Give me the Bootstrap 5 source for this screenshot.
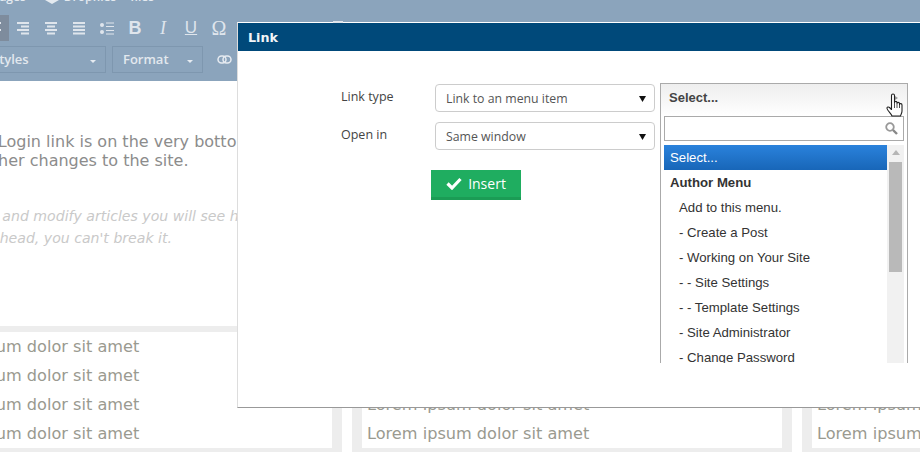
<!DOCTYPE html>
<html lang="en">
<head>
<meta charset="utf-8">
<title>Link</title>
<link href="https://cdn.jsdelivr.net/npm/bootstrap@5.3.0/dist/css/bootstrap.min.css" rel="stylesheet">
<style>
html,body{height:100%;overflow:hidden;background:#fff}
body{font-family:"Open Sans",sans-serif;position:relative}
.pg{width:1400px;margin:-14px 0 0 -98px}
.tb{background:#8ba4bc;height:95px}
.tb-top{height:29px;padding-left:90px;color:#e4eaf0;font-size:12px;font-weight:600;line-height:21px}
.tb-top span{display:block}
.tb-dia{margin:10px 5px 0 19px}
.tb-fl{margin-left:14px}
.tb-ico{margin-left:79px;height:26px}
.tb-btn{width:28px;height:26px;display:flex;align-items:center;justify-content:center;color:#dfe5ec}
.tb-btn.on{background:#7e8c9d}
.tb-b{font:bold 18px "Liberation Sans",sans-serif}
.tb-i{font:italic 18px "Liberation Serif",serif}
.tb-u{font:17px "Liberation Sans",sans-serif;text-decoration:underline}
.tb-o{font:20px "Liberation Serif",serif}
.tb-sel{margin-left:79px;margin-top:5px;gap:6px;align-items:center}
.tb-dd{height:27px;border:1px solid #7e97af;color:#e2e8ee;font-size:13px;font-weight:600;padding:0 10px;line-height:25px;position:relative}
.tb-dd::after{content:"";position:absolute;right:9px;top:13px;border:3px solid transparent;border-top:3px solid #e6ebf1;border-bottom:0}
.dd-a{width:125px}.dd-b{width:91px}
.art{height:245px;font-family:"DejaVu Sans",sans-serif;color:#8c8c8c;white-space:nowrap;padding-top:52px}
.art p{margin:0}
.l1{font-size:16px;line-height:18px;margin-left:61px!important}
.l2{font-size:16px;line-height:19px;margin-left:80px!important}
.l3{font-size:14.100px;line-height:22px;font-style:italic;color:#c9c9c9;margin-left:-6px!important;margin-top:35px!important}
.l4{font-size:14.100px;line-height:22px;font-style:italic;color:#c9c9c9;margin-left:65px!important}
.foot{display:grid;grid-template-columns:repeat(3,440px);gap:10px}
.fcol{border:solid #ededed;border-width:6px 10px 5px;padding:0 5px;height:127px;font-family:"DejaVu Sans",sans-serif;font-size:16.150px;line-height:29px;color:#9a9a90}
.dlg{position:absolute;left:237px;top:22px;width:700px;height:386px;background:#fff;border:1px solid #fff;border-left-color:#ddd;border-bottom:1px solid #999}
.dlg::before{content:"";position:absolute;left:95px;top:-2px;width:10px;height:2px;background:#dfe5ec}
.dlg-h{background:#00497a;color:#f2f5f8;font:bold 12.700px "DejaVu Sans",sans-serif;height:28px;line-height:29px;padding-left:10px}
.dlg-b{padding:33px 0 0 103px;gap:5px}
.frm{width:314px}
.frow{height:28px;margin-bottom:10px;align-items:center;font-size:12.500px;color:#444}
.frow label{width:94px;padding-bottom:1px}
.frow .form-select{width:220px;height:28px;padding:2px 10px 0;font-size:12.300px;color:#555;border:1px solid #ccc;border-radius:4px;background-image:url("data:image/svg+xml,%3Csvg xmlns='http://www.w3.org/2000/svg' width='8' height='7'%3E%3Cpath d='M0 1h7L3.500 7z' fill='%23111'/%3E%3C/svg%3E");background-position:right 7px center;background-size:8px 7px}
.ins{margin:20px 0 0 90px;width:90px;height:30px;padding:0;background:#1fad60;border:0;border-bottom:3px solid #1b9c55;border-radius:0;color:#fff;font-size:14px;display:flex;align-items:center;justify-content:center;gap:6px}
.ins:hover{background:#1fad60;color:#fff;border-bottom-color:#1b9c55}
.chz{width:248px;height:280px;margin-top:-1px;border:solid #aaa;border-width:1px 1px 0;overflow:hidden;font-family:"Liberation Sans",sans-serif;font-size:13.200px;color:#333;position:relative}
.chz-h{height:32px;padding:6px 8px;font-weight:700;color:#444;line-height:15px;background:linear-gradient(#eee,#fff);font-size:13px;position:relative}
.chz-h::after{content:"";position:absolute;left:231px;top:10px;border:4px solid transparent;border-left:6px solid #999;border-right:0}
.chz-s{margin:0 3px 4px;height:25px;border:1px solid #aaa;display:flex;align-items:center;justify-content:flex-end;padding-right:5px}
.chz-l{margin:0 3px;display:flex;background:#fff;height:240px}
.chz-i{flex:1;list-style:none;margin:0;padding:0}
.chz-i li{height:25px;line-height:25px;padding-left:15px;color:#333}
.chz-i li.hi{background:linear-gradient(#2a82dc,#1866b8);color:#fff;padding-left:6px}
.chz-i li.grp{font-weight:700;padding-left:6px}
.sbar{width:17px;background:#f1f1f1;padding:2px;display:flex;flex-direction:column;align-items:center}
.sbar i{display:block;border:4px solid transparent;border-bottom:5px solid #b5b5b5;border-top:0;margin:3px 0 6px}
.sbar b{display:block;width:13px;height:110px;background:#b9b9b9;margin-top:1px}
.hand{position:absolute;left:886px;top:92px}
</style>
</head>
<body>
<div class="pg">
  <div class="tb">
    <div class="tb-top d-flex">
      <span>Pages</span>
      <svg class="tb-dia" width="14" height="8" viewBox="0 0 14 8"><path d="M7 0l7 4-7 4-7-4z" fill="#e4eaf0"/></svg>
      <span>Dropfiles</span>
      <span class="tb-fl">files</span>
    </div>
    <div class="tb-ico d-flex">
      <div class="tb-btn on"><svg width="14" height="13" viewBox="0 0 14 13"><path d="M1 1h12M1 4.500h8M1 8h12M1 11.500h8" stroke="#dfe5ec" stroke-width="2"/></svg></div>
      <div class="tb-btn"><svg width="14" height="13" viewBox="0 0 14 13"><path d="M1 1h12M5 4.500h8M1 8h12M5 11.500h8" stroke="#dfe5ec" stroke-width="2"/></svg></div>
      <div class="tb-btn"><svg width="14" height="13" viewBox="0 0 14 13"><path d="M1 1h12M3 4.500h8M1 8h12M3 11.500h8" stroke="#dfe5ec" stroke-width="2"/></svg></div>
      <div class="tb-btn"><svg width="14" height="13" viewBox="0 0 14 13"><path d="M1 1h12M1 4.500h12M1 8h12M1 11.500h12" stroke="#dfe5ec" stroke-width="2"/></svg></div>
      <div class="tb-btn"><svg width="14" height="13" viewBox="0 0 14 13"><circle cx="2" cy="3" r="2" fill="#dfe5ec"/><circle cx="2" cy="10" r="2" fill="#dfe5ec"/><path d="M6 1h8M6 4.500h8M6 8.500h8M6 12h8" stroke="#dfe5ec" stroke-width="1"/></svg></div>
      <div class="tb-btn tb-b">B</div>
      <div class="tb-btn tb-i">I</div>
      <div class="tb-btn tb-u">U</div>
      <div class="tb-btn tb-o">Ω</div>
    </div>
    <div class="tb-sel d-flex">
      <div class="tb-dd dd-a">Styles</div>
      <div class="tb-dd dd-b">Format</div>
      <svg class="ms-2" width="15" height="9" viewBox="0 0 15 9"><rect x="1" y="1" width="8" height="7" rx="3.500" fill="none" stroke="#e6ebf1" stroke-width="1.500"/><rect x="6" y="1" width="8" height="7" rx="3.500" fill="none" stroke="#e6ebf1" stroke-width="1.500"/></svg>
    </div>
  </div>
  <div class="art">
    <p class="l1">The Login link is on the very bottom of the page.</p>
    <p class="l2">other changes to the site.</p>
    <p class="l3">When you add and modify articles you will see how easy it is.</p>
    <p class="l4">Go ahead, you can't break it.</p>
  </div>
  <div class="foot">
    <div class="fcol">Lorem ipsum dolor sit amet<br>Lorem ipsum dolor sit amet<br>Lorem ipsum dolor sit amet<br>Lorem ipsum dolor sit amet</div>
    <div class="fcol">Lorem ipsum dolor sit amet<br>Lorem ipsum dolor sit amet<br>Lorem ipsum dolor sit amet<br>Lorem ipsum dolor sit amet</div>
    <div class="fcol">Lorem ipsum dolor sit amet<br>Lorem ipsum dolor sit amet<br>Lorem ipsum dolor sit amet<br>Lorem ipsum dolor sit amet</div>
  </div>
</div>
<div class="dlg">
  <div class="dlg-h">Link</div>
  <div class="dlg-b d-flex">
    <div class="frm">
      <div class="frow d-flex"><label>Link type</label><select class="form-select"><option>Link to an menu item</option></select></div>
      <div class="frow d-flex"><label>Open in</label><select class="form-select"><option>Same window</option></select></div>
      <button type="button" class="btn ins"><svg width="16" height="13" viewBox="0 0 16 13"><path d="M1.500 6.500l4.500 4.500 8.500-9" fill="none" stroke="#fff" stroke-width="3.200"/></svg>Insert</button>
    </div>
    <div class="chz">
      <div class="chz-h">Select...</div>
      <div class="chz-s"><svg width="13" height="13" viewBox="0 0 13 13"><circle cx="5" cy="5" r="3.800" fill="none" stroke="#999" stroke-width="1.800"/><path d="M8 8l4 4" stroke="#888" stroke-width="2.400"/></svg></div>
      <div class="chz-l">
        <ul class="chz-i">
          <li class="hi">Select...</li>
          <li class="grp">Author Menu</li>
          <li>Add to this menu.</li>
          <li>- Create a Post</li>
          <li>- Working on Your Site</li>
          <li>- - Site Settings</li>
          <li>- - Template Settings</li>
          <li>- Site Administrator</li>
          <li>- Change Password</li>
        </ul>
        <div class="sbar"><i></i><b></b></div>
      </div>
    </div>
  </div>
</div>
<svg class="hand" width="18" height="26" viewBox="0 0 18 26"><path d="M5.500 3.500c0-2 3-2 3 0v7c0-1.500 2.500-1.500 2.500 0v1c0-1.500 2.500-1.500 2.500 0v1c0-1.300 2.500-1.300 2.500 .5v6c0 2-1 3-1.500 5H6c-.5-2-4.500-5-5-7.500-.3-1.500 1.500-2 2.500-1l2 2z" fill="#fff" stroke="#222" stroke-width="1.100" stroke-linejoin="round"/><path d="M8.500 11v5M11 12v4M13.500 13v3" stroke="#222" stroke-width=".8"/></svg>
</body>
</html>
